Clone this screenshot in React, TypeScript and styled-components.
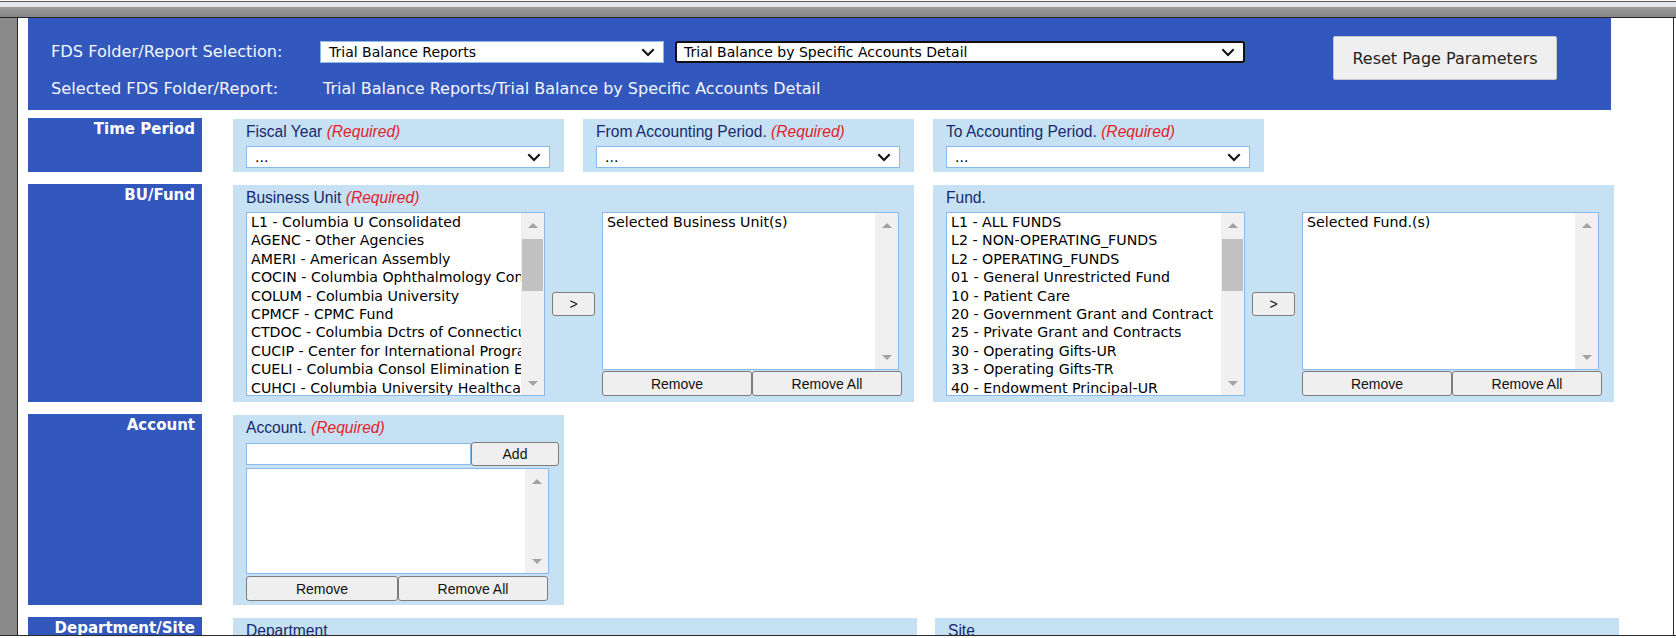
import styled, { createGlobalStyle } from 'styled-components';

const BU_OPTIONS = [
    'L1 - Columbia U Consolidated',
    'AGENC - Other Agencies',
    'AMERI - American Assembly',
    'COCIN - Columbia Ophthalmology Consultants',
    'COLUM - Columbia University',
    'CPMCF - CPMC Fund',
    'CTDOC - Columbia Dctrs of Connecticut',
    'CUCIP - Center for International Programs',
    'CUELI - Columbia Consol Elimination Entries',
    'CUHCI - Columbia University Healthcare',
];

const FUND_OPTIONS = [
    'L1 - ALL FUNDS',
    'L2 - NON-OPERATING_FUNDS',
    'L2 - OPERATING_FUNDS',
    '01 - General Unrestricted Fund',
    '10 - Patient Care',
    '20 - Government Grant and Contract',
    '25 - Private Grant and Contracts',
    '30 - Operating Gifts-UR',
    '33 - Operating Gifts-TR',
    '40 - Endowment Principal-UR',
];

const GlobalStyle = createGlobalStyle`
    html, body {
        margin: 0;
        padding: 0;
        background: #fff;
    }
    body {
        font-family: 'DejaVu Sans', Verdana, sans-serif;
    }
`;

const Chevron = () => (
    <svg width="14" height="9" viewBox="0 0 14 9">
        <polyline points="1.3,1.3 7,7 12.7,1.3" fill="none" stroke="#111" strokeWidth="2.1" />
    </svg>
);

interface SelectProps {
    value: string;
    width: number;
    focused?: boolean;
}

const Select = ({ value, width, focused }: SelectProps) => (
    <SelectBox $width={width} $focused={focused}>
        <span>{value}</span>
        <Chevron />
    </SelectBox>
);

interface ListBoxProps {
    items: string[];
    width: number;
    height: number;
    thumb?: { top: number; size: number };
}

const ListBox = ({ items, width, height, thumb }: ListBoxProps) => (
    <StyledListBox $width={width} $height={height}>
        <Items>
            {items.map((item, i) => (
                <Option key={i}>{item}</Option>
            ))}
        </Items>
        <ScrollBar>
            <ArrowBox>
                <ArrowUp />
            </ArrowBox>
            <Track>{thumb && <Thumb $top={thumb.top} $size={thumb.size} />}</Track>
            <ArrowBox>
                <ArrowDown />
            </ArrowBox>
        </ScrollBar>
    </StyledListBox>
);

const Required = () => <RequiredText>(Required)</RequiredText>;

interface DualListProps {
    label: string;
    required?: boolean;
    options: string[];
    selectedText: string;
}

const DualList = ({ label, required, options, selectedText }: DualListProps) => (
    <Panel $width={681}>
        <PanelLabel>
            {label} {required && <Required />}
        </PanelLabel>
        <DualRow>
            <ListBox items={options} width={299} height={184} thumb={{ top: 2, size: 52 }} />
            <SmallButton $width={43} $height={24}>&gt;</SmallButton>
            <SelectedColumn>
                <ListBox items={[selectedText]} width={297} height={158} />
                <ButtonPair>
                    <SmallButton $width={150}>Remove</SmallButton>
                    <SmallButton $width={150}>Remove All</SmallButton>
                </ButtonPair>
            </SelectedColumn>
        </DualRow>
    </Panel>
);

const App = () => {
    return (
        <Window>
            <GlobalStyle />
            <TopChrome />
            <WindowBody>
                <LeftGutter />
                <Content>
                    <Header>
                        <HeaderFields>
                            <HeaderLabel>FDS Folder/Report Selection:</HeaderLabel>
                            <SelectPair>
                                <Select value="Trial Balance Reports" width={344} />
                                <Select value="Trial Balance by Specific Accounts Detail" width={570} focused />
                            </SelectPair>
                            <HeaderLabel>Selected FDS Folder/Report:</HeaderLabel>
                            <HeaderValue>Trial Balance Reports/Trial Balance by Specific Accounts Detail</HeaderValue>
                        </HeaderFields>
                        <ResetButton>Reset Page Parameters</ResetButton>
                    </Header>

                    <Rows>
                        <Row $height={54}>
                            <RowLabel>Time Period</RowLabel>
                            <Panels>
                                <Panel $width={331}>
                                    <PanelLabel>
                                        Fiscal Year <Required />
                                    </PanelLabel>
                                    <Select value="..." width={304} />
                                </Panel>
                                <Panel $width={331}>
                                    <PanelLabel>
                                        From Accounting Period. <Required />
                                    </PanelLabel>
                                    <Select value="..." width={304} />
                                </Panel>
                                <Panel $width={331}>
                                    <PanelLabel>
                                        To Accounting Period. <Required />
                                    </PanelLabel>
                                    <Select value="..." width={304} />
                                </Panel>
                            </Panels>
                        </Row>

                        <Row $height={218}>
                            <RowLabel>BU/Fund</RowLabel>
                            <Panels>
                                <DualList
                                    label="Business Unit"
                                    required
                                    options={BU_OPTIONS}
                                    selectedText="Selected Business Unit(s)"
                                />
                                <DualList
                                    label="Fund."
                                    options={FUND_OPTIONS}
                                    selectedText="Selected Fund.(s)"
                                />
                            </Panels>
                        </Row>

                        <Row $height={191}>
                            <RowLabel>Account</RowLabel>
                            <Panels>
                                <Panel $width={331}>
                                    <PanelLabel>
                                        Account. <Required />
                                    </PanelLabel>
                                    <AddRow>
                                        <TextInput />
                                        <SmallButton $width={88} $height={24}>Add</SmallButton>
                                    </AddRow>
                                    <AccountList>
                                        <ListBox items={[]} width={303} height={106} />
                                    </AccountList>
                                    <ButtonPair>
                                        <SmallButton $width={152}>Remove</SmallButton>
                                        <SmallButton $width={150}>Remove All</SmallButton>
                                    </ButtonPair>
                                </Panel>
                            </Panels>
                        </Row>

                        <Row $height={200}>
                            <RowLabel>Department/Site</RowLabel>
                            <Panels $gap={18}>
                                <Panel $width={684}>
                                    <PanelLabel>Department</PanelLabel>
                                </Panel>
                                <Panel $width={684}>
                                    <PanelLabel>Site</PanelLabel>
                                </Panel>
                            </Panels>
                        </Row>
                    </Rows>
                </Content>
            </WindowBody>
        </Window>
    );
};

const Window = styled.div`
    width: 1676px;
    height: 638px;
    overflow: hidden;
    display: flex;
    flex-direction: column;
    background: #fff;
`;

const TopChrome = styled.div`
    flex-shrink: 0;
    height: 18px;
    background: linear-gradient(
        to bottom,
        #fafafa 0,
        #fafafa 1px,
        #5a5a5a 1px,
        #5a5a5a 2px,
        #e4e8ec 2px,
        #e4e8ec 7px,
        #9a9a9a 7px,
        #868686 17px,
        #262626 17px,
        #262626 18px
    );
`;

const WindowBody = styled.div`
    display: flex;
    height: 617px;
    border-bottom: 1px solid #2a2a2a;
`;

const LeftGutter = styled.div`
    width: 17px;
    flex-shrink: 0;
    background: #8a8a8a;
    border-right: 1px solid #262626;
`;

const Content = styled.div`
    width: 1656px;
    box-sizing: border-box;
    padding-left: 10px;
    overflow: hidden;
    background: #fff;
    border-right: 1px solid #2a2a2a;
`;

const Header = styled.div`
    width: 1583px;
    height: 92px;
    box-sizing: border-box;
    padding: 18px 54px 0 23px;
    background: #3258bd;
    display: flex;
    align-items: flex-start;
`;

const HeaderFields = styled.div`
    flex: 1;
    display: grid;
    grid-template-columns: 269px auto;
    row-gap: 15px;
    align-items: center;
    padding-top: 5px;
`;

const HeaderLabel = styled.div`
    color: #f4f6fb;
    font-size: 16.2px;
    line-height: 22px;
    white-space: nowrap;
`;

const HeaderValue = styled(HeaderLabel)`
    padding-left: 3px;
    font-size: 16px;
`;

const SelectPair = styled.div`
    display: flex;
    gap: 11px;
`;

const SelectBox = styled.div<{ $width: number; $focused?: boolean }>`
    width: ${({ $width }) => $width}px;
    height: 22px;
    box-sizing: border-box;
    display: flex;
    align-items: center;
    justify-content: space-between;
    padding: 0 8px 0 7px;
    background: #fff;
    border: ${({ $focused }) => ($focused ? '2px solid #111' : '1px solid #8ab9ea')};
    border-radius: ${({ $focused }) => ($focused ? '3px' : '0')};
    font-size: 14px;
    color: #000;
    white-space: nowrap;

    span {
        padding-left: ${({ $focused }) => ($focused ? '0' : '1px')};
    }
`;

const ResetButton = styled.button`
    width: 224px;
    height: 44px;
    flex-shrink: 0;
    margin-left: auto;
    background: #efefef;
    border: 1px solid #c4c8d2;
    border-radius: 2px;
    font-family: 'DejaVu Sans', Verdana, sans-serif;
    font-size: 16px;
    color: #222;
    padding: 0;
`;

const Rows = styled.div`
    display: flex;
    flex-direction: column;
    gap: 12px;
    margin-top: 8px;
`;

const Row = styled.div<{ $height: number }>`
    display: flex;
    height: ${({ $height }) => $height}px;
    flex-shrink: 0;
`;

const RowLabel = styled.div`
    width: 174px;
    flex-shrink: 0;
    box-sizing: border-box;
    padding: 2px 7px 0 0;
    background: #3258bd;
    color: #fff;
    font-size: 15px;
    font-weight: bold;
    line-height: 18px;
    text-align: right;
    white-space: nowrap;
`;

const Panels = styled.div<{ $gap?: number }>`
    display: flex;
    gap: ${({ $gap }) => $gap ?? 19}px;
    margin-left: 31px;
    padding-top: 1px;
`;

const Panel = styled.div<{ $width: number }>`
    width: ${({ $width }) => $width}px;
    box-sizing: border-box;
    padding: 4px 0 4px 13px;
    background: #c6e1f3;
`;

const PanelLabel = styled.div`
    font-family: 'Liberation Sans', Arial, sans-serif;
    font-size: 15.6px;
    line-height: 17px;
    color: #18296c;
    margin-bottom: 6px;
    white-space: nowrap;
`;

const RequiredText = styled.span`
    color: #e3212b;
    font-style: italic;
`;

const DualRow = styled.div`
    display: flex;
    align-items: center;
    gap: 7px;
`;

const SelectedColumn = styled.div`
    display: flex;
    flex-direction: column;
    gap: 1px;
`;

const ButtonPair = styled.div`
    display: flex;
`;

const SmallButton = styled.button<{ $width: number; $height?: number }>`
    width: ${({ $width }) => $width}px;
    height: ${({ $height }) => $height ?? 25}px;
    box-sizing: border-box;
    padding: 0;
    background: #efefef;
    border: 1px solid #7d7d7d;
    border-radius: 3px;
    font-family: 'Liberation Sans', Arial, sans-serif;
    font-size: 14px;
    color: #111;
    flex-shrink: 0;
`;

const StyledListBox = styled.div<{ $width: number; $height: number }>`
    width: ${({ $width }) => $width}px;
    height: ${({ $height }) => $height}px;
    box-sizing: border-box;
    display: flex;
    background: #fff;
    border: 1px solid #8ab9ea;
`;

const Items = styled.div`
    flex: 1;
    min-width: 0;
    overflow: hidden;
    padding-left: 4px;
`;

const Option = styled.div`
    height: 18.4px;
    line-height: 18.4px;
    font-size: 14.2px;
    color: #000;
    white-space: nowrap;
    overflow: hidden;
`;

const ScrollBar = styled.div`
    width: 23px;
    flex-shrink: 0;
    background: #f0f0f0;
    display: flex;
    flex-direction: column;
`;

const ArrowBox = styled.div`
    height: 24px;
    flex-shrink: 0;
    display: flex;
    align-items: center;
    justify-content: center;
`;

const ArrowUp = styled.div`
    width: 0;
    height: 0;
    border-left: 5.5px solid transparent;
    border-right: 5.5px solid transparent;
    border-bottom: 5px solid #a3a3a3;
`;

const ArrowDown = styled(ArrowUp)`
    border-bottom: none;
    border-top: 5px solid #a3a3a3;
`;

const Track = styled.div`
    flex: 1;
    padding: 0 1px;
`;

const Thumb = styled.div<{ $top: number; $size: number }>`
    margin-top: ${({ $top }) => $top}px;
    height: ${({ $size }) => $size}px;
    background: #c1c1c1;
`;

const AddRow = styled.div`
    display: flex;
    align-items: center;
`;

const TextInput = styled.input`
    width: 225px;
    height: 22px;
    box-sizing: border-box;
    border: 1px solid #8ab9ea;
    background: #fff;
    padding: 0 3px;
    outline: none;
`;

const AccountList = styled.div`
    margin: 2px 0;
`;

export default App;
